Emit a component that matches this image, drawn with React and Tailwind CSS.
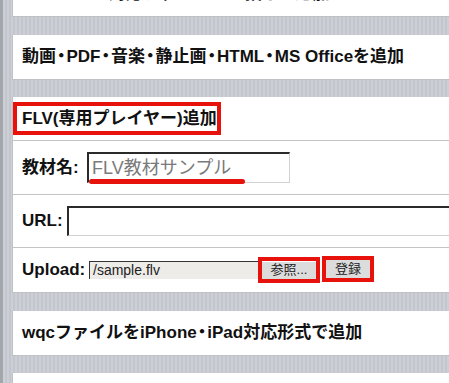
import React from "react";

const font = { fontFamily: '"Liberation Sans", "Noto Sans CJK JP", sans-serif' };

// narrow middle dot, like the reference's proportional ・
const Dot = () => (
  <span className="[font-feature-settings:'palt'] mx-[1px]">・</span>
);

const Panel = ({ className = "", children }) => {
  return (
    <div
      className={
        "bg-white border-l border-b border-[#bfc1c4] flex items-center pl-[9px] text-[17px] font-bold text-[#111] whitespace-nowrap " +
        className
      }
    >
      {children}
    </div>
  );
};

const App = () => {
  return (
    <div className="w-[449px] h-[383px] overflow-hidden flex" style={font}>
      <div className="w-[3px] bg-[#a3a7ac]" />
      <div className="flex-1 flex flex-col pl-[9px] bg-[repeating-linear-gradient(90deg,#ccd0d6_0px,#ccd0d6_2px,#c3c7cd_2px,#c3c7cd_4px)]">
        <Panel className="h-[45px] mt-[-28px] shrink-0">
          SCORM1.2対応ファイルを一括して追加
        </Panel>

        <Panel className="h-[45px] mt-[18px] shrink-0">
          動画<Dot />PDF<Dot />音楽<Dot />静止画<Dot />HTML<Dot />MS Officeを追加
        </Panel>

        <div className="mt-[17px] bg-white border-l border-b border-[#bfc1c4] flex flex-col shrink-0 text-[#111]">
          <div className="h-[44px] border-b border-[#c4c4c4] flex items-center">
            <div className="w-[208px] h-[33px] border-[4px] border-[#e8120c] flex items-center pl-[5px] text-[17px] font-bold whitespace-nowrap">
              FLV(専用プレイヤー)追加
            </div>
          </div>

          <div className="h-[54px] border-b border-[#c4c4c4] flex items-center pl-[9px]">
            <span className="text-[17px] font-bold w-[65px]">教材名:</span>
            <div className="relative">
              <div className="w-[203px] h-[31px] border-t-[2px] border-l-[2px] border-r border-b border-t-[#2a2a2a] border-l-[#2a2a2a] border-r-[#d2d2d2] border-b-[#d2d2d2] flex items-center pl-[3px] text-[18px] text-[#7a7a7a]">
                FLV教材サンプル
              </div>
              <div className="absolute left-[2px] top-[27px] w-[156px] h-[5px] rounded-full bg-[#e8120c]" />
            </div>
          </div>

          <div className="h-[53px] border-b border-[#c4c4c4] flex items-center pl-[9px]">
            <span className="text-[17px] font-bold w-[45px]">URL:</span>
            <div className="flex-1 h-[30px] border-t-[2px] border-l-[2px] border-b border-t-[#2a2a2a] border-l-[#2a2a2a] border-b-[#d2d2d2]" />
          </div>

          <div className="h-[44px] flex items-center pl-[9px]">
            <span className="text-[17px] font-bold w-[67px]">Upload:</span>
            <div className="w-[169px] h-[18px] bg-[#eeece8] border-t border-l border-[#333] flex items-center pl-[3px] text-[14px] text-[#222]">
              /sample.flv
            </div>
            <div className="w-[62px] h-[26px] border-[4px] border-[#e8120c] flex items-center justify-center">
              <div className="w-[54px] h-[17px] bg-[#dcdcdc] flex items-center justify-center text-[13px] text-[#222]">
                参照...
              </div>
            </div>
            <div className="ml-[2px] w-[52px] h-[26px] border-[4px] border-[#e8120c] flex items-center justify-center -mt-[2px]">
              <div className="w-[44px] h-[18px] bg-[#dcdcdc] flex items-center justify-center text-[13px] text-[#222]">
                登録
              </div>
            </div>
          </div>
        </div>

        <Panel className="h-[45px] mt-[18px] shrink-0">
          wqcファイルをiPhone<Dot />iPad対応形式で追加
        </Panel>

        <div className="mt-[17px] h-[45px] shrink-0 bg-white border-l border-[#bfc1c4]" />
      </div>
    </div>
  );
};

export default App;
